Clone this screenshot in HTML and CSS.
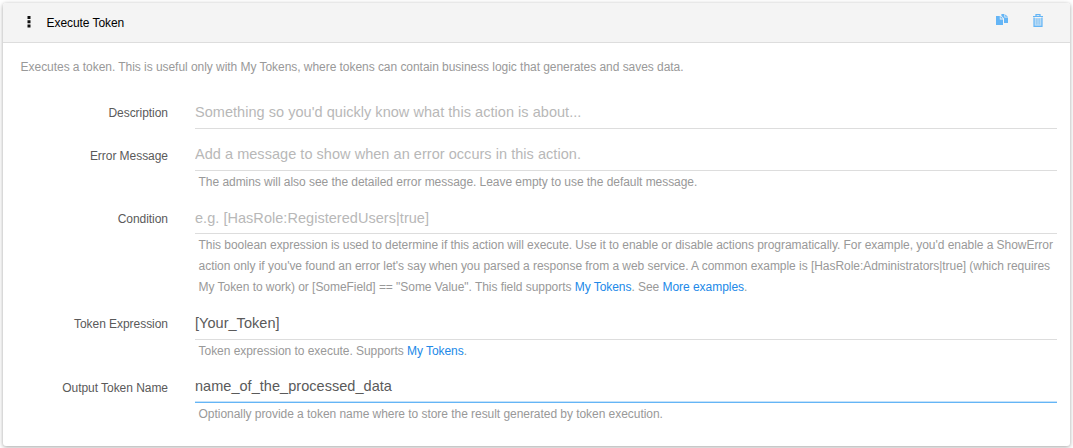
FILE: index.html
```html
<!DOCTYPE html>
<html lang="en">
<head>
<meta charset="utf-8">
<title>Execute Token</title>
<link rel="stylesheet" href="styles.css">
</head>
<body>
<section class="card">
  <header class="card-header">
    <svg class="grip" width="4" height="12" viewBox="0 0 4 12"><path d="M.5 0h3v3h-3zM.5 4.2h3v3h-3zM.5 8.4h3v3h-3z"/></svg>
    <h1 class="title">Execute Token</h1>
    <div class="tools">
      <svg class="tool" width="12" height="12" viewBox="0 0 12 12"><path d="M0 2h3.8v3.4H7V11H0z"/><path d="M4.5 2 7 4.6H4.5z"/><path d="M5.4 1.8V0h3v3.4H12V9H8V4.4z"/><path d="M9.2.4 12 2.7H9.2z"/></svg>
      <svg class="tool" width="12" height="13" viewBox="0 0 12 13"><path class="bin-fill" d="M2 4h8v8H2z"/><path class="bin-line" d="M1 2.5h10M4 2V.6h4V2M2 3.5v8.9h8V3.5"/><path class="bin-bars" d="M4.5 4.5v6M6 4.5v6M7.5 4.5v6"/></svg>
    </div>
  </header>
  <div class="card-body">
    <p class="intro">Executes a token. This is useful only with My Tokens, where tokens can contain business logic that generates and saves data.</p>
    <form class="form">
      <label class="label" for="description">Description</label>
      <div class="field">
        <input class="input" id="description" placeholder="Something so you'd quickly know what this action is about...">
      </div>
      <label class="label label-low" for="error">Error Message</label>
      <div class="field">
        <input class="input" id="error" placeholder="Add a message to show when an error occurs in this action.">
        <p class="help">The admins will also see the detailed error message. Leave empty to use the default message.</p>
      </div>
      <label class="label label-low" for="condition">Condition</label>
      <div class="field field-long">
        <input class="input input-low" id="condition" placeholder="e.g. [HasRole:RegisteredUsers|true]">
        <p class="help">This boolean expression is used to determine if this action will execute. Use it to enable or disable actions programatically. For example, you'd enable a ShowError<br>action only if you've found an error let's say when you parsed a response from a web service. A common example is [HasRole:Administrators|true] (which requires<br>My Token to work) or [SomeField] == "Some Value". This field supports <a class="link" href="#">My Tokens</a>. See <a class="link" href="#">More examples</a>.</p>
      </div>
      <label class="label" for="expression">Token Expression</label>
      <div class="field">
        <input class="input" id="expression" value="[Your_Token]">
        <p class="help">Token expression to execute. Supports <a class="link" href="#">My Tokens</a>.</p>
      </div>
      <label class="label label-low" for="output">Output Token Name</label>
      <div class="field">
        <input class="input input-active" id="output" value="name_of_the_processed_data">
        <p class="help">Optionally provide a token name where to store the result generated by token execution.</p>
      </div>
    </form>
  </div>
</section>
</body>
</html>
```
FILE: styles.css
```css
* { box-sizing: border-box; }
body {
  margin: 0;
  padding: 3px 3px 2px;
  background: #fff;
  color: #999;
  font: 12px/21px "Liberation Sans", Arial, sans-serif;
  letter-spacing: -.046px;
}
.card {
  height: 443px;
  border-radius: 3px;
  background: #fff;
  box-shadow: 0 1px 4px rgba(0, 0, 0, .37);
}
.card-header {
  display: flex;
  align-items: center;
  height: 40px;
  padding: 0 26px 0 24px;
  border-bottom: 1px solid #ddd;
  border-radius: 3px 3px 0 0;
  background: #f4f4f4;
}
.grip { margin: 0 15.5px 2px 0; fill: #111; }
.title { margin: 0; padding-top: 2px; font-size: 12px; font-weight: 400; color: #000; letter-spacing: -.06px; }
.tools { display: flex; gap: 24px; margin: 0 0 5px auto; }
.tool { fill: #64b5f6; }
.bin-fill { fill: #b9dbf5; }
.bin-line { fill: none; stroke: #64b5f6; stroke-width: 1.2; }
.bin-bars { fill: none; stroke: #8dc5f2; stroke-width: .7; }
.card-body { padding: 14px 13px 0 17.6px; }
.intro { margin: 0 0 19px; }
.form {
  display: grid;
  grid-template-columns: 147.4px 862px;
  column-gap: 27px;
  row-gap: 10px;
}
.label { padding-top: 6px; text-align: right; color: #5a5a5a; }
.label-low { padding-top: 7px; }
.field-long { padding-bottom: 1px; }
.input {
  display: block;
  width: 100%;
  height: 32px;
  padding: 0 0 2px;
  border: 0;
  border-bottom: 1px solid #ddd;
  outline: 0;
  background: none;
  color: #5a5a5a;
  font: 14.5px "Liberation Sans", Arial, sans-serif;
  letter-spacing: .04px;
}
.input-low { padding-bottom: 0; }
.input::placeholder { color: #b8b8b8; opacity: 1; }
.input-active { border-color: #64b5f6; box-shadow: inset 0 -1px #c5e2fa; }
.help { margin: 0 0 -1px; padding: 1px 0 0 3.6px; white-space: nowrap; }
.link { color: #2189e8; text-decoration: none; }
```
